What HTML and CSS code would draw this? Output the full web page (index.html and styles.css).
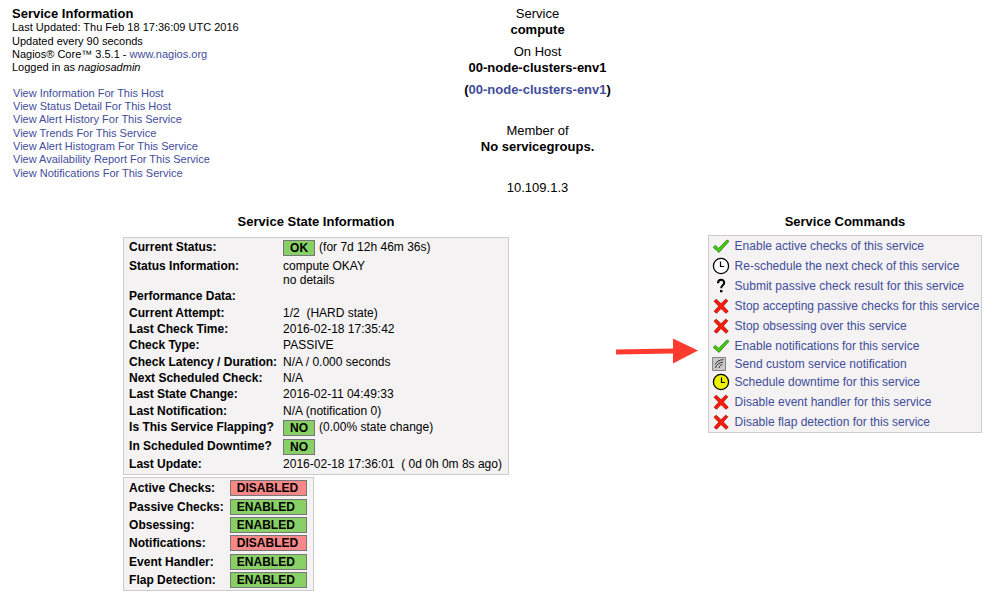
FILE: index.html
```html
<!DOCTYPE html>
<html lang="en">
<head>
<meta charset="utf-8">
<title>Extended Information</title>
<link rel="stylesheet" href="styles.css">
</head>
<body>
<svg class="sprite" aria-hidden="true">
  <symbol id="check" viewBox="0 0 18 18"><path d="M1.200 10.300l2.200-1.900 3.300 3L15 3l2 1.200L7 15.400z" fill="#4acb12" stroke="#1d7a08" stroke-width=".8" stroke-linejoin="round"/></symbol>
  <symbol id="cross" viewBox="0 0 18 18"><path d="M2 4.200l2.200-1.900L9 6.700l4.700-4.500 2.100 1.600L11.300 9l4.900 5.200-2.200 2.100L9 11.500l-4.500 4.800-2.300-2L6.800 9.200z" fill="#ff1a0a" stroke="#a0100b" stroke-width=".8" stroke-linejoin="round"/></symbol>
  <symbol id="clock" viewBox="0 0 18 18"><circle cx="9" cy="9" r="7.600" fill="#fff" stroke="#000" stroke-width="1.300"/><path d="M8.500 4.500v5h3.600" fill="none" stroke="#000" stroke-width="1.200"/></symbol>
  <symbol id="downtime" viewBox="0 0 18 18"><circle cx="9" cy="9" r="7.600" fill="#eef200" stroke="#000" stroke-width="1.300"/><path d="M9.500 4.500v5H13" fill="none" stroke="#000" stroke-width="1.200"/></symbol>
  <symbol id="question" viewBox="0 0 18 18"><path d="M6 6.200C6 1.600 12.200 1.800 12.200 5.700c0 2.600-3 2.500-3 5.500" fill="none" stroke="#000" stroke-width="2"/><path d="M8 13h2.400v2.300H8z"/></symbol>
  <symbol id="notify" viewBox="0 0 18 18"><path d="M.5 2.500h13v13H.5z" fill="#c8c8c8" stroke="#858585"/><path d="M3 9.500C4.500 6.500 7.500 4.700 11.500 4.700M3.500 13C4.300 9.500 7 7.500 11 7.200M7 13c.3-1.800 1.400-3 3.300-3.600" fill="none" stroke="#333" stroke-width="1"/></symbol>
</svg>

<header class="top">
  <div class="info">
    <h1 class="title">Service Information</h1>
    <p class="line">Last Updated: Thu Feb 18 17:36:09 UTC 2016</p>
    <p class="line">Updated every 90 seconds</p>
    <p class="line">Nagios® Core™ 3.5.1 - <a href="#">www.nagios.org</a></p>
    <p class="line">Logged in as <i>nagiosadmin</i></p>
    <ul class="views">
      <li><a href="#">View Information For This Host</a></li>
      <li><a href="#">View Status Detail For This Host</a></li>
      <li><a href="#">View Alert History For This Service</a></li>
      <li><a href="#">View Trends For This Service</a></li>
      <li><a href="#">View Alert Histogram For This Service</a></li>
      <li><a href="#">View Availability Report For This Service</a></li>
      <li><a href="#">View Notifications For This Service</a></li>
    </ul>
  </div>
  <div class="subject">
    <p>Service<br><b>compute</b></p>
    <p>On Host<br><b>00-node-clusters-env1</b></p>
    <p><b>(<a href="#">00-node-clusters-env1</a>)</b></p>
    <p class="spaced">Member of<br><b>No servicegroups.</b></p>
    <p class="spaced">10.109.1.3</p>
  </div>
</header>

<main class="details">
  <section class="state">
    <h2 class="heading">Service State Information</h2>
    <div class="panel">
      <table class="facts">
        <tr><th>Current Status:</th><td><span class="badge ok">OK</span>(for 7d 12h 46m 36s)</td></tr>
        <tr><th>Status Information:</th><td>compute OKAY<br>no details</td></tr>
        <tr><th>Performance Data:</th><td></td></tr>
        <tr><th>Current Attempt:</th><td>1/2&nbsp; (HARD state)</td></tr>
        <tr><th>Last Check Time:</th><td>2016-02-18 17:35:42</td></tr>
        <tr><th>Check Type:</th><td>PASSIVE</td></tr>
        <tr><th>Check Latency / Duration:</th><td>N/A / 0.000 seconds</td></tr>
        <tr><th>Next Scheduled Check:</th><td>N/A</td></tr>
        <tr><th>Last State Change:</th><td>2016-02-11 04:49:33</td></tr>
        <tr><th>Last Notification:</th><td>N/A (notification 0)</td></tr>
        <tr><th>Is This Service Flapping?</th><td><span class="badge ok">NO</span>(0.00% state change)</td></tr>
        <tr><th>In Scheduled Downtime?</th><td><span class="badge ok">NO</span></td></tr>
        <tr><th>Last Update:</th><td>2016-02-18 17:36:01&nbsp; ( 0d 0h 0m 8s ago)</td></tr>
      </table>
    </div>
    <div class="panel">
      <table class="switches">
        <tr><th>Active Checks:</th><td><span class="badge wide off">DISABLED</span></td></tr>
        <tr><th>Passive Checks:</th><td><span class="badge wide ok">ENABLED</span></td></tr>
        <tr><th>Obsessing:</th><td><span class="badge wide ok">ENABLED</span></td></tr>
        <tr><th>Notifications:</th><td><span class="badge wide off">DISABLED</span></td></tr>
        <tr><th>Event Handler:</th><td><span class="badge wide ok">ENABLED</span></td></tr>
        <tr><th>Flap Detection:</th><td><span class="badge wide ok">ENABLED</span></td></tr>
      </table>
    </div>
  </section>

  <section class="commands">
    <h2 class="heading">Service Commands</h2>
    <ul class="panel actions">
      <li><svg class="icon"><use href="#check"/></svg><a href="#">Enable active checks of this service</a></li>
      <li><svg class="icon"><use href="#clock"/></svg><a href="#">Re-schedule the next check of this service</a></li>
      <li><svg class="icon"><use href="#question"/></svg><a href="#">Submit passive check result for this service</a></li>
      <li><svg class="icon"><use href="#cross"/></svg><a href="#">Stop accepting passive checks for this service</a></li>
      <li><svg class="icon"><use href="#cross"/></svg><a href="#">Stop obsessing over this service</a></li>
      <li class="pointed"><svg class="arrow" viewBox="0 0 84 26" aria-hidden="true"><path d="M1 11.500L58 10.500V0.500L83 12.500 58 25.500V15.500L1 16.500z" fill="#ff3b30"/></svg><svg class="icon"><use href="#check"/></svg><a href="#">Enable notifications for this service</a></li>
      <li class="short"><svg class="icon"><use href="#notify"/></svg><a href="#">Send custom service notification</a></li>
      <li><svg class="icon"><use href="#downtime"/></svg><a href="#">Schedule downtime for this service</a></li>
      <li><svg class="icon"><use href="#cross"/></svg><a href="#">Disable event handler for this service</a></li>
      <li><svg class="icon"><use href="#cross"/></svg><a href="#">Disable flap detection for this service</a></li>
    </ul>
  </section>
</main>
</body>
</html>
```

FILE: styles.css
```css
* { box-sizing: border-box; }

body {
  margin: 0;
  padding: 6px 12px;
  background: #fff;
  color: #000;
  font: 12px/14px "Liberation Sans", Arial, sans-serif;
}

h1, h2, p, ul { margin: 0; padding: 0; }
ul { list-style: none; }
a { color: #3f4d9b; text-decoration: none; }

.sprite { position: absolute; width: 0; height: 0; }

.top {
  display: grid;
  grid-template-columns: 4fr 6fr 3fr;
}

.title { font-size: 13px; line-height: 15px; }
.line { font-size: 11px; line-height: 13px; }
.line:nth-child(3) { line-height: 14px; }

.views {
  margin-top: 12px;
  padding-left: 1px;
  font-size: 11px;
  line-height: 13px;
}
.views li:nth-child(3n + 1) { line-height: 14px; }

.subject {
  display: flex;
  flex-direction: column;
  gap: 6px;
  text-align: center;
  font-size: 13px;
  line-height: 16px;
}
.spaced { margin-top: 19px; }

.details {
  display: grid;
  grid-template-columns: 1fr 286px;
  margin-top: 18px;
}

.heading {
  font-size: 13px;
  line-height: 16px;
  text-align: center;
}

.state {
  display: grid;
  justify-content: center;
  justify-items: start;
  row-gap: 2px;
  padding-right: 82px;
}
.state .heading { justify-self: center; margin-bottom: 5px; }

.commands {
  display: flex;
  flex-direction: column;
  align-items: center;
  gap: 5px;
}

.panel {
  border: 1px solid #ccc;
  background: #f4f2f2;
}

table { border-collapse: collapse; }
th, td {
  padding: 0 5px;
  text-align: left;
  white-space: nowrap;
}
td { padding-right: 6px; }

.facts { margin-bottom: 3px; }
.facts th { vertical-align: top; padding-top: 2px; padding-right: 2px; }
.facts td { padding-top: 1px; padding-left: 4px; }
.facts tr { height: 16px; }
.facts tr:nth-child(3n) { height: 17px; }
.facts tr:nth-child(2) { height: 30px; }
.facts tr:nth-child(1), .facts tr:nth-child(11) { height: 19px; }
.facts tr:nth-child(12) { height: 18px; }

.switches { margin: 1px 0; }
.switches td { padding-left: 1px; }
.switches tr { height: 18px; }
.switches tr:nth-child(3n + 2) { height: 19px; }

.badge {
  display: inline-block;
  margin-right: 4px;
  padding: 0 6px;
  border: 1px solid #777;
  font-weight: bold;
  vertical-align: middle;
}
.ok { background: #88d066; }
.off { background: #f88888; }
.wide { display: block; width: 77px; margin-right: 0; }

.actions li {
  display: flex;
  align-items: center;
  gap: 5px;
  height: 20px;
  padding: 0 2px 0 3px;
  white-space: nowrap;
}
.actions .short { height: 16px; }
.icon { flex: none; width: 18px; height: 18px; }

.pointed { position: relative; }
.arrow {
  position: absolute;
  right: 100%;
  top: 2px;
  width: 84px;
  height: 26px;
  margin-right: 10px;
}
```
